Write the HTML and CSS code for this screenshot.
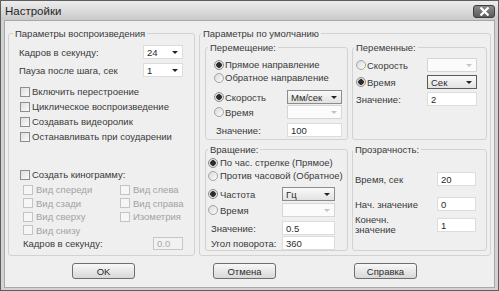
FILE: index.html
```html
<!DOCTYPE html>
<html lang="ru">
<head>
    <meta charset="UTF-8">
    <title>Настройки</title>
    <link rel="stylesheet" href="styles.css">
</head>
<body>
<div class="window">
    <div class="titlebar">
        <span class="title">Настройки</span>
        <span class="close">
            <svg width="11" height="9" viewBox="0 0 11 9"><path d="M1.5 0.5 L9.5 8.5 M9.5 0.5 L1.5 8.5" stroke="#fff" stroke-width="2.2" fill="none"/></svg>
        </span>
    </div>

    <div class="client">
        <div class="panels">
            <!-- левая панель -->
            <fieldset class="group playback">
                <legend>Параметры воспроизведения</legend>
                <div class="body">
                    <div class="field">
                        <span>Кадров в секунду:</span>
                        <span class="combo w40"><span>24</span><i class="arrow"></i></span>
                    </div>
                    <div class="field second">
                        <span>Пауза после шага, сек</span>
                        <span class="combo w40"><span>1</span><i class="arrow"></i></span>
                    </div>
                    <div class="checks">
                        <div class="check-row"><i class="check"></i>Включить перестроение</div>
                        <div class="check-row"><i class="check"></i>Циклическое воспроизведение</div>
                        <div class="check-row"><i class="check"></i>Создавать видеоролик</div>
                        <div class="check-row"><i class="check"></i>Останавливать при соударении</div>
                    </div>
                    <div class="check-row kino"><i class="check"></i>Создать кинограмму:</div>
                    <div class="views">
                        <div class="check-row off"><i class="check"></i>Вид спереди</div>
                        <div class="check-row off"><i class="check"></i>Вид слева</div>
                        <div class="check-row off"><i class="check"></i>Вид сзади</div>
                        <div class="check-row off"><i class="check"></i>Вид справа</div>
                        <div class="check-row off"><i class="check"></i>Вид сверху</div>
                        <div class="check-row off"><i class="check"></i>Изометрия</div>
                        <div class="check-row off"><i class="check"></i>Вид снизу</div>
                    </div>
                    <div class="field fps">
                        <span>Кадров в секунду:</span>
                        <span class="input disabled w30">0.0</span>
                    </div>
                </div>
            </fieldset>

            <!-- правая панель -->
            <fieldset class="group defaults">
                <legend>Параметры по умолчанию</legend>
                <div class="inner">
                    <fieldset class="group move">
                        <legend>Перемещение:</legend>
                        <div class="body">
                            <div class="radio-row"><i class="radio on"></i>Прямое направление</div>
                            <div class="radio-row"><i class="radio"></i>Обратное направление</div>
                            <div class="field r1">
                                <span class="radio-row"><i class="radio on"></i>Скорость</span>
                                <span class="combo active w55"><span>Мм/сек</span><i class="arrow"></i></span>
                            </div>
                            <div class="field r2">
                                <span class="radio-row"><i class="radio"></i>Время</span>
                                <span class="combo disabled w55"><span></span><i class="arrow"></i></span>
                            </div>
                            <div class="field r3">
                                <span class="label">Значение:</span>
                                <span class="input w55">100</span>
                            </div>
                        </div>
                    </fieldset>

                    <fieldset class="group vars">
                        <legend>Переменные:</legend>
                        <div class="body">
                            <div class="field">
                                <span class="radio-row"><i class="radio"></i>Скорость</span>
                                <span class="combo disabled w50"><span></span><i class="arrow"></i></span>
                            </div>
                            <div class="field">
                                <span class="radio-row"><i class="radio on"></i>Время</span>
                                <span class="combo active dark w50"><span>Сек</span><i class="arrow"></i></span>
                            </div>
                            <div class="field">
                                <span>Значение:</span>
                                <span class="input w50">2</span>
                            </div>
                        </div>
                    </fieldset>

                    <fieldset class="group rotate">
                        <legend>Вращение:</legend>
                        <div class="body">
                            <div class="radio-row"><i class="radio on"></i>По час. стрелке (Прямое)</div>
                            <div class="radio-row"><i class="radio"></i>Против часовой (Обратное)</div>
                            <div class="field r1">
                                <span class="radio-row"><i class="radio on"></i>Частота</span>
                                <span class="combo active w53"><span>Гц</span><i class="arrow"></i></span>
                            </div>
                            <div class="field r2">
                                <span class="radio-row"><i class="radio"></i>Время</span>
                                <span class="combo disabled w53"><span></span><i class="arrow"></i></span>
                            </div>
                            <div class="field r3">
                                <span class="label">Значение:</span>
                                <span class="input w53">0.5</span>
                            </div>
                            <div class="field r4">
                                <span class="label">Угол поворота:</span>
                                <span class="input w53">360</span>
                            </div>
                        </div>
                    </fieldset>

                    <fieldset class="group alpha">
                        <legend>Прозрачность:</legend>
                        <div class="body">
                            <div class="field">
                                <span>Время, сек</span>
                                <span class="input w39">20</span>
                            </div>
                            <div class="field a2">
                                <span>Нач. значение</span>
                                <span class="input w39">0</span>
                            </div>
                            <div class="field a3">
                                <span class="two-line">Конечн.<br>значение</span>
                                <span class="input w39">1</span>
                            </div>
                        </div>
                    </fieldset>
                </div>
            </fieldset>
        </div>

        <div class="buttons">
            <button class="btn">OK</button>
            <button class="btn">Отмена</button>
            <button class="btn">Справка</button>
        </div>
    </div>
</div>
</body>
</html>
```

FILE: styles.css
```css
html, body {
    margin: 0;
    padding: 0;
}
body {
    width: 499px;
    height: 291px;
    background: #d4d4d4;
    font-family: "Liberation Sans", Arial, sans-serif;
    font-size: 9.5px;
    color: #3a3a3a;
    white-space: nowrap;
}
.window {
    width: 499px;
    height: 291px;
    box-sizing: border-box;
    border: 1px solid #5e5e5e;
    background: #d2d2d2;
    display: flex;
    flex-direction: column;
}
.titlebar {
    height: 19px;
    display: flex;
    align-items: center;
    justify-content: space-between;
    padding: 0 3px 0 4px;
    background: linear-gradient(#ededed, #cacaca);
}
.title {
    font-size: 11.5px;
    color: #262626;
}
.close {
    width: 22px;
    height: 13px;
    margin-top: 1px;
    box-sizing: border-box;
    border: 1px solid #3f3f3f;
    border-radius: 3px;
    background: linear-gradient(#8a8a8a, #5c5c5c);
    display: flex;
    align-items: center;
    justify-content: center;
}

.client {
    flex: 1;
    margin: 0 3px 2px;
    background: #efefef;
    border: 1px solid #a8a8a8;
}
.panels {
    display: flex;
    gap: 4px;
    height: 229px;
    padding: 6px 0 0 3px;
}

/* рамки групп */
.group {
    margin: 0;
    padding: 0;
    min-width: 0;
    box-sizing: border-box;
    border: 1px solid #d2d2d2;
    border-radius: 3px;
}
.group legend {
    padding: 0 2px;
    margin-left: 2px;
    line-height: 13px;
    color: #3a3a3a;
}
.playback {
    width: 187px;
}
.playback legend {
    margin-left: 4px;
}
.defaults {
    width: 292px;
}
.defaults > legend {
    margin-left: 1px;
}
.vars legend {
    margin-left: 1px;
}
.alpha legend {
    margin-left: 0;
}

.field {
    display: flex;
    align-items: center;
    justify-content: space-between;
    height: 14px;
}

/* левая панель */
.playback .body {
    padding: 5px 11px 0 10px;
}
.playback .second {
    margin-top: 4px;
}
.checks {
    margin-top: 7px;
}
.check-row {
    display: flex;
    align-items: center;
    height: 15px;
}
.check {
    flex-shrink: 0;
    width: 10px;
    height: 10px;
    box-sizing: border-box;
    margin: 0 2px 0 1px;
    border: 1px solid #8e8e8e;
    background: linear-gradient(135deg, #dedede, #fbfbfb);
}
.kino {
    margin-top: 23px;
}
.views {
    margin-top: 1px;
    padding-left: 4px;
    display: grid;
    grid-template-columns: 97px auto;
    grid-auto-rows: 13.5px;
}
.views .check-row {
    height: 13.5px;
}
.views .check {
    margin: 0 3px 0 0;
}
.check-row.off {
    color: #a2a2a2;
}
.off .check {
    border-color: #c4c4c4;
    background: #f6f6f6;
}
.fps {
    height: 13px;
    padding-left: 4px;
}

/* поля ввода и списки */
.combo, .input {
    flex-shrink: 0;
    height: 14px;
    box-sizing: border-box;
    background: #fff;
    border: 1px solid #dcdcdc;
    display: flex;
    align-items: center;
    padding: 0 3px;
    color: #2a2a2a;
}
.combo {
    justify-content: space-between;
    padding-right: 4px;
}
.arrow {
    width: 0;
    height: 0;
    border-left: 3px solid transparent;
    border-right: 3px solid transparent;
    border-top: 3px solid #222;
}
.combo.active {
    border-color: #8c8c8c;
    background: linear-gradient(#fafafa, #e2e2e2);
}
.combo.dark {
    border-color: #5a5a5a;
}
.combo.disabled {
    border-color: #d6d6d6;
    background: #fbfbfb;
}
.combo.disabled .arrow {
    border-top-color: #c4c4c4;
}
.input.disabled {
    border-color: #c6c6c6;
    background: #f2f2f2;
    color: #a8a8a8;
    height: 13px;
}
.w30 { width: 30px; }
.w39 { width: 39px; }
.w40 { width: 40px; }
.w50 { width: 50px; }
.w53 { width: 53px; }
.w55 { width: 55px; }

/* радио-кнопки */
.radio-row {
    display: flex;
    align-items: center;
    height: 13px;
}
.radio {
    flex-shrink: 0;
    width: 10px;
    height: 10px;
    box-sizing: border-box;
    border-radius: 50%;
    border: 1px solid #a4a4a4;
    background: linear-gradient(135deg, #d8d8d8, #fdfdfd);
    margin-right: 1px;
}
.radio.on {
    border-color: #8a8a8a;
    background: radial-gradient(circle, #2c2c2c 0 2.5px, #c8c8c8 3px, #f2f2f2 4px);
}

/* правая панель */
.inner {
    display: grid;
    grid-template-columns: 143px 1fr;
    grid-template-rows: 99px 108px;
    column-gap: 4px;
    row-gap: 3px;
    padding: 1px 3px 0 5px;
}
.move .body {
    padding: 4px 5px 0 8px;
}
.move .r1 { margin-top: 6px; }
.move .r2 { margin-top: 1px; }
.move .r3 { margin-top: 4px; }
.move .label { margin-left: 2px; }

.vars .body {
    padding: 4px 9px 0 3px;
}
.vars .field + .field {
    margin-top: 3px;
}

.rotate .body {
    padding: 0 12px 0 2px;
}
.rotate .radio {
    margin-right: 2px;
}
.rotate .r1 { margin-top: 5px; }
.rotate .r2 { margin-top: 2px; }
.rotate .r3 { margin-top: 4px; }
.rotate .r4 { margin-top: 1px; }
.rotate .label { margin-left: 3px; }

.alpha .body {
    padding: 16px 10px 0 2px;
}
.alpha .a2 { margin-top: 11px; }
.alpha .a3 {
    margin-top: 4px;
    height: 20px;
}
.two-line {
    line-height: 10px;
}

/* кнопки диалога */
.buttons {
    display: flex;
    gap: 78px;
    padding: 7px 0 0 67px;
}
.btn {
    width: 63px;
    height: 16px;
    padding: 0;
    box-sizing: border-box;
    border: 1px solid #6e6e6e;
    border-radius: 3px;
    background: linear-gradient(#f8f8f8, #d8d8d8);
    font-family: inherit;
    font-size: 9.5px;
    color: #2a2a2a;
}
```
